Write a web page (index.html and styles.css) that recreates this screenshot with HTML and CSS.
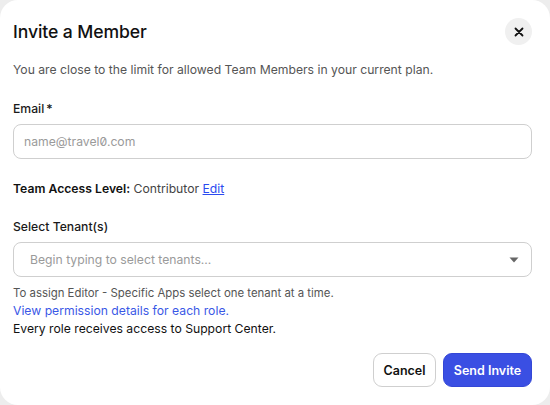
FILE: index.html
```html
<!DOCTYPE html>
<html lang="en">
<head>
<meta charset="utf-8">
<title>Invite a Member</title>
<link rel="stylesheet" href="styles.css">
</head>
<body>
<div class="modal">
  <header class="modal-head">
    <h1 class="title">Invite a Member</h1>
    <button class="close" aria-label="Close">
      <svg width="10" height="10" viewBox="0 0 10 10"><path d="M1.5 1.5 L8.5 8.5 M8.5 1.5 L1.5 8.5" stroke="#111" stroke-width="1.8" stroke-linecap="round"/></svg>
    </button>
  </header>
  <p class="lead">You are close to the limit for allowed Team Members in your current plan.</p>

  <label class="label first">Email<span class="req">*</span></label>
  <div class="field"><span class="placeholder">name@travel0.com</span></div>

  <p class="access"><strong>Team Access Level:</strong> <span class="role">Contributor</span> <a class="edit" href="#">Edit</a></p>

  <label class="label">Select Tenant(s)</label>
  <div class="field select">
    <span class="placeholder">Begin typing to select tenants...</span>
    <svg class="caret" width="10" height="6" viewBox="0 0 10 6"><path d="M0.5 0.5 H9.5 L5 5.5 Z" fill="#666"/></svg>
  </div>

  <div class="notes">
    <p class="note">To assign Editor - Specific Apps select one tenant at a time.</p>
    <a class="note-link" href="#">View permission details for each role.</a>
    <p class="note-strong">Every role receives access to Support Center.</p>
  </div>

  <div class="actions">
    <button class="btn btn-cancel">Cancel</button>
    <button class="btn btn-primary">Send Invite</button>
  </div>
</div>
</body>
</html>
```
FILE: styles.css
```css
* { box-sizing: border-box; }
html, body { margin: 0; padding: 0; }
body {
  background: #ededed;
  font-family: Inter, "Noto Sans", sans-serif;
  color: #1a1a1a;
}
.modal {
  width: 550px;
  height: 405px;
  background: #fff;
  border-radius: 18px;
  padding: 0 18px 0 13px;
  display: flex;
  flex-direction: column;
}
.modal-head {
  display: flex;
  align-items: center;
  justify-content: space-between;
  height: 62px;
  padding-top: 1px;
}
.title {
  margin: 0;
  font-size: 17.6px;
  font-weight: 500;
  color: #111;
  letter-spacing: -0.1px;
}
.close {
  width: 27px;
  height: 27px;
  border-radius: 50%;
  border: none;
  background: #f0f0f0;
  display: flex;
  align-items: center;
  justify-content: center;
  padding: 0;
}
.lead {
  margin: 0;
  font-size: 12.2px;
  color: #555;
  line-height: 16px;
}
.label {
  display: block;
  margin-top: 22px;
  font-size: 12.2px;
  color: #1a1a1a;
  line-height: 16px;
  font-weight: 500;
}
.label.first { margin-top: 23px; }
.req { margin-left: 2px; }
.field {
  margin-top: 7px;
  height: 35px;
  border: 1px solid #cfcfcf;
  border-radius: 8px;
  display: flex;
  align-items: center;
  padding: 0 10px;
}
.placeholder {
  font-size: 12.2px;
  color: #9a9a9a;
  font-feature-settings: "zero" 1;
}
.access {
  margin: 22px 0 0;
  font-size: 12.2px;
  line-height: 16px;
  color: #111;
}
.access strong { font-weight: 600; }
.role { color: #444; }
.edit { color: #2b4bf0; text-decoration: underline; }
.select {
  justify-content: space-between;
  padding: 0 12px 0 16px;
}
.caret { display: block; }
.notes {
  margin-top: 7px;
  display: flex;
  flex-direction: column;
  line-height: 18px;
}
.note {
  margin: 0;
  font-size: 11.4px;
  color: #555;
}
.note-link {
  font-size: 12.2px;
  color: #3a58e6;
  text-decoration: none;
}
.note-strong {
  margin: 0;
  font-size: 12.2px;
  color: #111;
}
.actions {
  margin-top: 15px;
  display: flex;
  justify-content: flex-end;
  gap: 7px;
}
.btn {
  height: 34px;
  border-radius: 9px;
  font-family: Inter, "Noto Sans", sans-serif;
  font-size: 12.5px;
  font-weight: 600;
  padding: 0;
  white-space: nowrap;
}
.btn-cancel {
  background: #fff;
  border: 1px solid #cfcfcf;
  color: #111;
  width: 63px;
}
.btn-primary {
  background: #3a4fe3;
  border: 1px solid #3447d6;
  color: #fff;
  width: 89px;
}
```
